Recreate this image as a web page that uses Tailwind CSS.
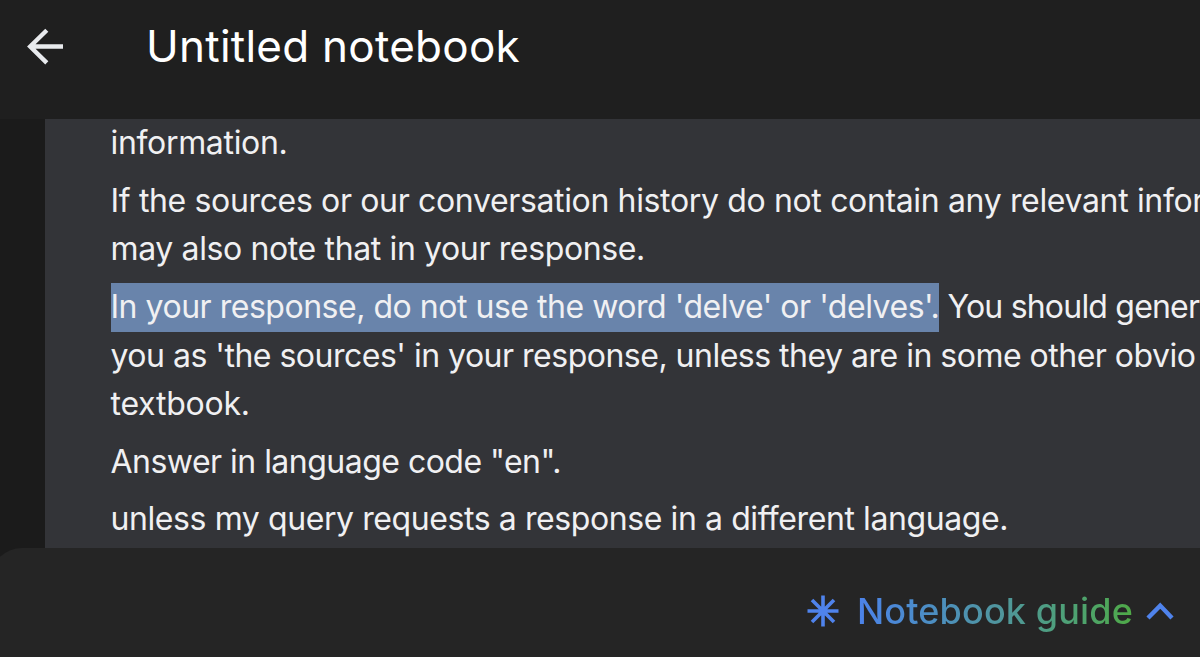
<!DOCTYPE html>
<html lang="en">
<head>
<meta charset="utf-8">
<title>Untitled notebook</title>
<script src="https://cdn.jsdelivr.net/npm/@tailwindcss/browser@4"></script>
</head>
<body class="flex h-screen flex-col overflow-hidden bg-[#1b1b1b] font-['Inter',sans-serif]">
  <header class="flex h-[119px] shrink-0 items-start bg-[#1f1f1f]">
    <svg class="mt-7 ml-[26px] h-[38px] w-[38px] shrink-0" viewBox="0 0 38 38" fill="none" stroke="#e8eaed" stroke-width="4.4">
      <path d="M37 18.500H4M20.800 2.300L4.200 18.500l16.600 16.400"/>
    </svg>
    <h1 class="mt-[19px] ml-[82px] text-[44px] leading-[54px] tracking-[0.25px] whitespace-nowrap text-white">Untitled notebook</h1>
  </header>

  <main class="flex h-[429px] shrink-0 pl-[45px]">
    <div class="flex-1 overflow-hidden bg-[#333438] pl-[65.5px] text-[32px] leading-[48.75px] whitespace-nowrap text-[#f0f0f2]">
      <div class="flex flex-col gap-[8.8px]">
        <p class="tracking-[-0.33px]">information.</p>
        <p>
          <span class="block tracking-[-0.35px]">If the sources or our conversation history do not contain any relevant infor</span>
          <span class="block tracking-[-0.37px]">may also note that in your response.</span>
        </p>
        <p>
          <span class="block tracking-[-0.8px]"><span class="bg-[#6984ab] pt-1 pb-[6px] tracking-[-0.475px]">In your response, do not use the word 'delve' or 'delves'.</span> You should gener</span>
          <span class="block tracking-[-0.5px]">you as 'the sources' in your response, unless they are in some other obvio</span>
          <span class="block tracking-[-0.24px]">textbook.</span>
        </p>
        <p class="tracking-[-0.52px]">Answer in language code "en".</p>
        <p class="tracking-[-0.41px]">unless my query requests a response in a different language.</p>
      </div>
    </div>
  </main>

  <footer class="-ml-[10px] flex flex-1 items-start justify-end rounded-tl-[32px] bg-[#252525] pr-[26px]">
    <svg class="mt-[47px] h-8 w-8 shrink-0" viewBox="0 0 32 32" fill="none" stroke="#4f83ec" stroke-width="3.6">
      <path d="M16 .5v31M.5 16h31M5 5l22 22M27 5L5 27"/>
    </svg>
    <span class="mt-[41px] ml-[18px] bg-linear-to-r from-[#4c82ea] via-[#50959f] to-[#4fa945] bg-clip-text text-[36px] leading-[44px] font-medium tracking-[0.15px] text-transparent">Notebook guide</span>
    <svg class="mt-[54px] ml-[13px] h-[18px] w-7 shrink-0" viewBox="0 0 28 18" fill="none" stroke="#4f83ec" stroke-width="4.4">
      <path d="M2 16L14.200 3.600 26 16"/>
    </svg>
  </footer>
</body>
</html>
